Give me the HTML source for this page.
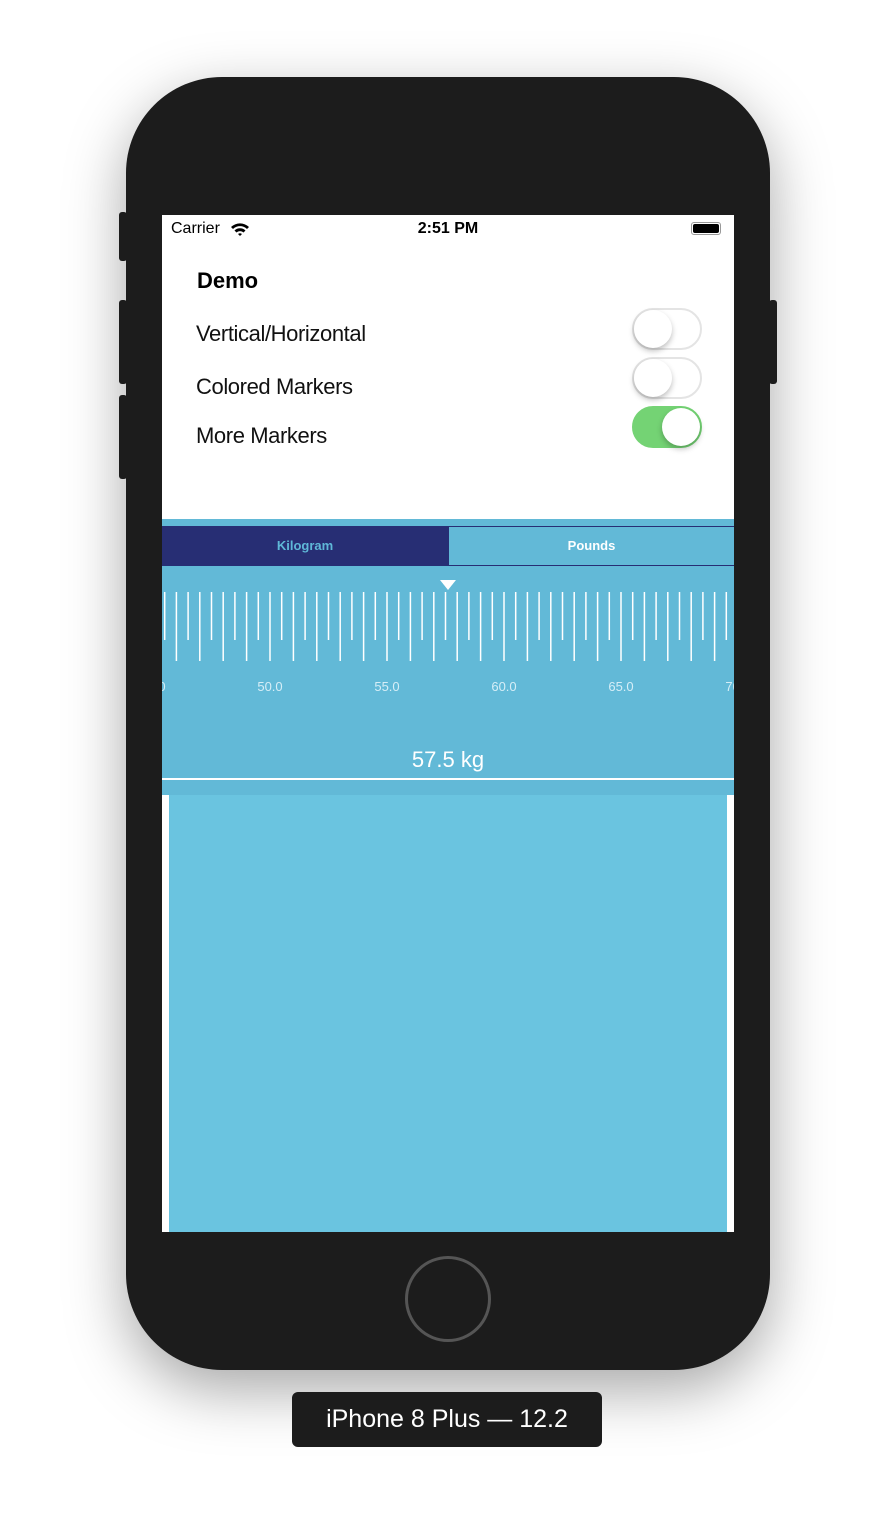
<!DOCTYPE html>
<html><head><style>
body{margin:0;width:896px;height:1520px;background:#fff;position:relative;overflow:hidden;font-family:"Liberation Sans",sans-serif}
.a{position:absolute}
.phone{left:126px;top:77px;width:644px;height:1293px;background:#1c1c1c;border-radius:96px;box-shadow:0 20px 60px rgba(0,0,0,.35)}
.btn{background:#1c1c1c;border-radius:3px}
.scr{left:162px;top:215px;width:572px;height:1017px;background:#fff;overflow:hidden}
.sw{width:70px;height:42px;border-radius:21px;border:2px solid #e4e4e4;background:#fff;box-sizing:border-box}
.knob{width:38px;height:38px;border-radius:50%;background:#fff;box-shadow:0 3px 6px rgba(0,0,0,.25);top:0}
.lbl{font-size:22px;color:#111;left:34px;letter-spacing:-0.4px}
.num{font-size:13px;color:#d6eef7;top:464px;width:50px;text-align:center}
</style></head><body>
<div class="a phone"></div>
<div class="a btn" style="left:119px;top:212px;width:8px;height:49px"></div>
<div class="a btn" style="left:119px;top:300px;width:8px;height:84px"></div>
<div class="a btn" style="left:119px;top:395px;width:8px;height:84px"></div>
<div class="a btn" style="left:769px;top:300px;width:8px;height:84px"></div>
<div class="a scr">
 <div class="a" style="left:9px;top:5px;font-size:16px">Carrier</div>
 <svg class="a" style="left:68px;top:7px" width="20" height="15" viewBox="0 0 20 15"><path d="M1 5a13 13 0 0 1 18 0l-2 2a10 10 0 0 0-14 0zM4.5 8.5a8 8 0 0 1 11 0l-2 2a5 5 0 0 0-7 0zM8 12a3 3 0 0 1 4 0l-2 2z" fill="#000"/></svg>
 <div class="a" style="left:0;width:572px;text-align:center;top:5px;font-size:16px;font-weight:bold">2:51 PM</div>
 <div class="a" style="left:529px;top:7px;width:30px;height:13px;border:1px solid #999;border-radius:3px;box-sizing:border-box;padding:1px"><div style="background:#000;height:100%;border-radius:2px"></div></div>
 <div class="a" style="left:35px;top:53px;font-size:22px;font-weight:bold">Demo</div>
 <div class="a lbl" style="top:106px">Vertical/Horizontal</div>
 <div class="a lbl" style="top:159px">Colored Markers</div>
 <div class="a lbl" style="top:208px">More Markers</div>
 <div class="a sw" style="left:470px;top:93px"><div class="a knob" style="left:0"></div></div>
 <div class="a sw" style="left:470px;top:142px"><div class="a knob" style="left:0"></div></div>
 <div class="a sw" style="left:470px;top:191px;background:#74d374;border-color:#74d374"><div class="a knob" style="left:28px"></div></div>
 <div class="a" style="left:0;top:304px;width:572px;height:276px;background:#62b9d7"></div>
 <div class="a" style="left:0;top:311px;width:286px;height:40px;background:#272e74;color:#5fb8d8;font-size:13px;font-weight:bold;text-align:center;line-height:40px">Kilogram</div>
 <div class="a" style="left:286px;top:311px;width:286px;height:40px;box-sizing:border-box;border:1.5px solid #272e74;border-right:none;color:#fff;font-size:13px;font-weight:bold;text-align:center;line-height:38px">Pounds</div>
 <svg class="a" style="left:278px;top:365px" width="16" height="11"><path d="M0 0h16L8 10z" fill="#fff"/></svg>
 <svg class="a" style="left:0;top:377px" width="572" height="70">
  <g stroke="#fff" stroke-width="1.5" id="t"></g>
 </svg>
 <div class="a num" style="left:-25px">0</div>
 <div class="a num" style="left:83px">50.0</div>
 <div class="a num" style="left:200px">55.0</div>
 <div class="a num" style="left:317px">60.0</div>
 <div class="a num" style="left:434px">65.0</div>
 <div class="a num" style="left:551px">70.0</div>
 <div class="a" style="left:0;width:572px;text-align:center;top:532px;font-size:22px;color:#fff">57.5 kg</div>
 <div class="a" style="left:0;top:563px;width:572px;height:2px;background:#fff"></div>
 <div class="a" style="left:7px;top:580px;width:558px;height:437px;background:#6ac4e0"></div>
</div>
<div class="a" style="left:405px;top:1256px;width:80px;height:80px;border:3px solid #555;border-radius:50%"></div>
<div class="a" style="left:292px;top:1392px;width:310px;height:55px;background:#1c1c1c;border-radius:6px;color:#fff;font-size:25px;text-align:center;line-height:55px">iPhone 8 Plus — 12.2</div>
<script>
var g=document.getElementById('t'),s='';
for(var k=0;k<50;k++){var x=2.7+11.7*k;if(x>572)break;var long=(k%2==1);s+='<line x1="'+x+'" y1="0" x2="'+x+'" y2="'+(long?69:48)+'"/>';}
g.innerHTML=s;
</script>
</body></html>
